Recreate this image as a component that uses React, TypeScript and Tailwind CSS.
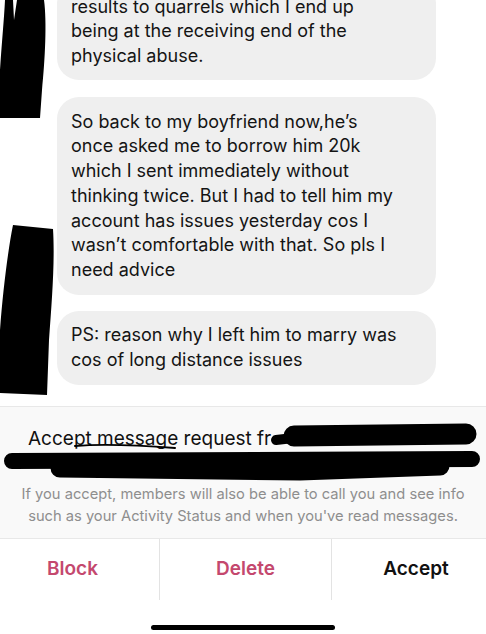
import React from 'react';

const bubbles = [
  {
    lines: ['results to quarrels which I end up', 'being at the receiving end of the', 'physical abuse.'],
    cls: 'mt-[-18px] pt-[12.6px] pb-[11.7px]',
  },
  {
    lines: [
      'So back to my boyfriend now,he\u2019s',
      'once asked me to borrow him 20k',
      'which I sent immediately without',
      'thinking twice. But I had to tell him my',
      'account has issues yesterday cos I',
      'wasn\u2019t comfortable with that. So pls I',
      'need advice',
    ],
    cls: 'mt-[17px] pt-[12.3px] pb-[12px]',
  },
  {
    lines: ['PS: reason why I left him to marry was', 'cos of long distance issues'],
    cls: 'mt-[16px] pt-[12.6px] pb-[12px]',
  },
];

// marker scribbles over names / avatars
const Redactions = () => (
  <svg className="absolute inset-0 pointer-events-none" width="486" height="634" viewBox="0 0 486 634">
    <path d="M5 0 L13 0 L14 20 L17 0 L44 0 C47 22 45 60 42 90 L40 118 L0 118 L0 70 C2 40 4 20 5 0Z" fill="#000" />
    <path d="M13 225 L53 229 C55 260 52 300 49 340 L47 395 L0 393 L0 330 C3 290 8 250 13 225Z" fill="#000" />
    <g stroke="#000" strokeLinecap="round" fill="none">
      <path d="M75 446 Q110 443 175 448" strokeWidth="2" />
      <path d="M294 436 L466 434" strokeWidth="21" />
      <path d="M276 440 L302 437" strokeWidth="10" />
      <path d="M12 461 L472 459" strokeWidth="16" />
      <path d="M60 468 L300 471 L440 466" strokeWidth="19" />
    </g>
  </svg>
);

const App = () => {
  return (
    <div className="relative w-[486px] h-[634px] overflow-hidden bg-white font-['Inter',sans-serif]">
      <div className="h-[406px] pl-[57px] flex flex-col">
        {bubbles.map((b, i) => (
          <div
            key={i}
            className={`w-[379px] rounded-[22px] bg-[#efefef] px-[14px] text-[18px] leading-[24.7px] text-[#141414] ${b.cls}`}
          >
            {b.lines.map((l, j) => (
              <div key={j} className="whitespace-nowrap">{l}</div>
            ))}
          </div>
        ))}
      </div>

      <div className="h-[132px] border-t border-[#e8e8e8] bg-[#f9f9f9] pt-[20px]">
        <div className="pl-[28px] text-[19px] leading-[24px] text-[#111]">
          <div className="whitespace-nowrap">Accept message request fr</div>
          <div className="h-[24px]" />
        </div>
        <p className="mt-[8px] text-center text-[14.7px] leading-[22px] text-[#8e8e8e]">
          If you accept, members will also be able to call you and see info
          <br />
          such as your Activity Status and when you&apos;ve read messages.
        </p>
      </div>

      <div className="flex h-[62px] border-t border-[#e8e8e8]">
        <button className="w-[159px] flex items-center justify-center pr-[14px] text-[19px] font-semibold text-[#c4486e]">
          Block
        </button>
        <button className="w-[172px] flex items-center justify-center border-l border-[#e3e3e3] text-[19px] font-semibold text-[#c4486e]">
          Delete
        </button>
        <button className="flex-1 flex items-center justify-center border-l border-[#e3e3e3] pl-[14px] text-[19px] font-semibold text-[#111]">
          Accept
        </button>
      </div>

      <div className="flex justify-center pt-[25px]">
        <div className="w-[184px] h-[5px] rounded-full bg-black" />
      </div>

      <Redactions />
    </div>
  );
};

export default App;
